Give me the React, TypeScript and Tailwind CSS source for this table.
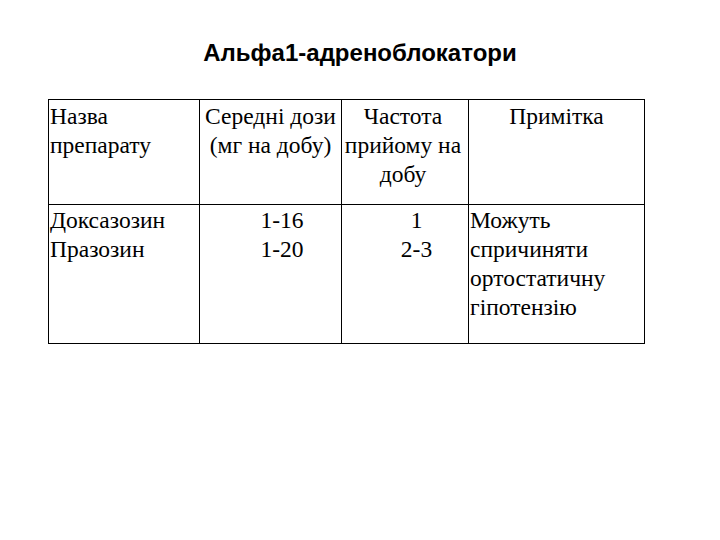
export default function App() {
  return (
    <div className="w-[720px] h-[540px] bg-white text-black">
      <h1 className="pt-[37px] text-center text-[24px] leading-[32px] font-bold font-[family-name:'Liberation_Sans',Arial,sans-serif]">
        Альфа1-адреноблокатори
      </h1>
      <table className="mt-[30px] ml-[48px] w-[596px] border-collapse table-fixed font-[family-name:'Liberation_Serif','Times_New_Roman',serif] text-[23.5px] leading-[29px]">
        <colgroup>
          <col className="w-[151px]" />
          <col className="w-[142px]" />
          <col className="w-[127px]" />
          <col className="w-[176px]" />
        </colgroup>
        <tbody>
          <tr className="h-[105px] align-top">
            <td className="border border-black px-px pt-[2px] text-left">
              Назва
              <br />
              препарату
            </td>
            <td className="border border-black px-px pt-[2px] text-center whitespace-nowrap">
              Середні дози
              <br />
              (мг на добу)
            </td>
            <td className="border border-black pl-px pr-[5px] pt-[2px] text-center">
              Частота прийому на добу
            </td>
            <td className="border border-black px-px pt-[2px] text-center">Примітка</td>
          </tr>
          <tr className="h-[139px] align-top">
            <td className="border border-black px-px pt-[1px] text-left">
              Доксазозин
              <br />
              Празозин
            </td>
            <td className="border border-black pl-[24px] pr-px pt-[1px] text-center">
              1-16
              <br />
              1-20
            </td>
            <td className="border border-black pl-[24px] pr-px pt-[1px] text-center">
              1
              <br />
              2-3
            </td>
            <td className="border border-black px-px pt-[1px] text-left">
              Можуть
              <br />
              спричиняти
              <br />
              ортостатичну
              <br />
              гіпотензію
            </td>
          </tr>
        </tbody>
      </table>
    </div>
  );
}
